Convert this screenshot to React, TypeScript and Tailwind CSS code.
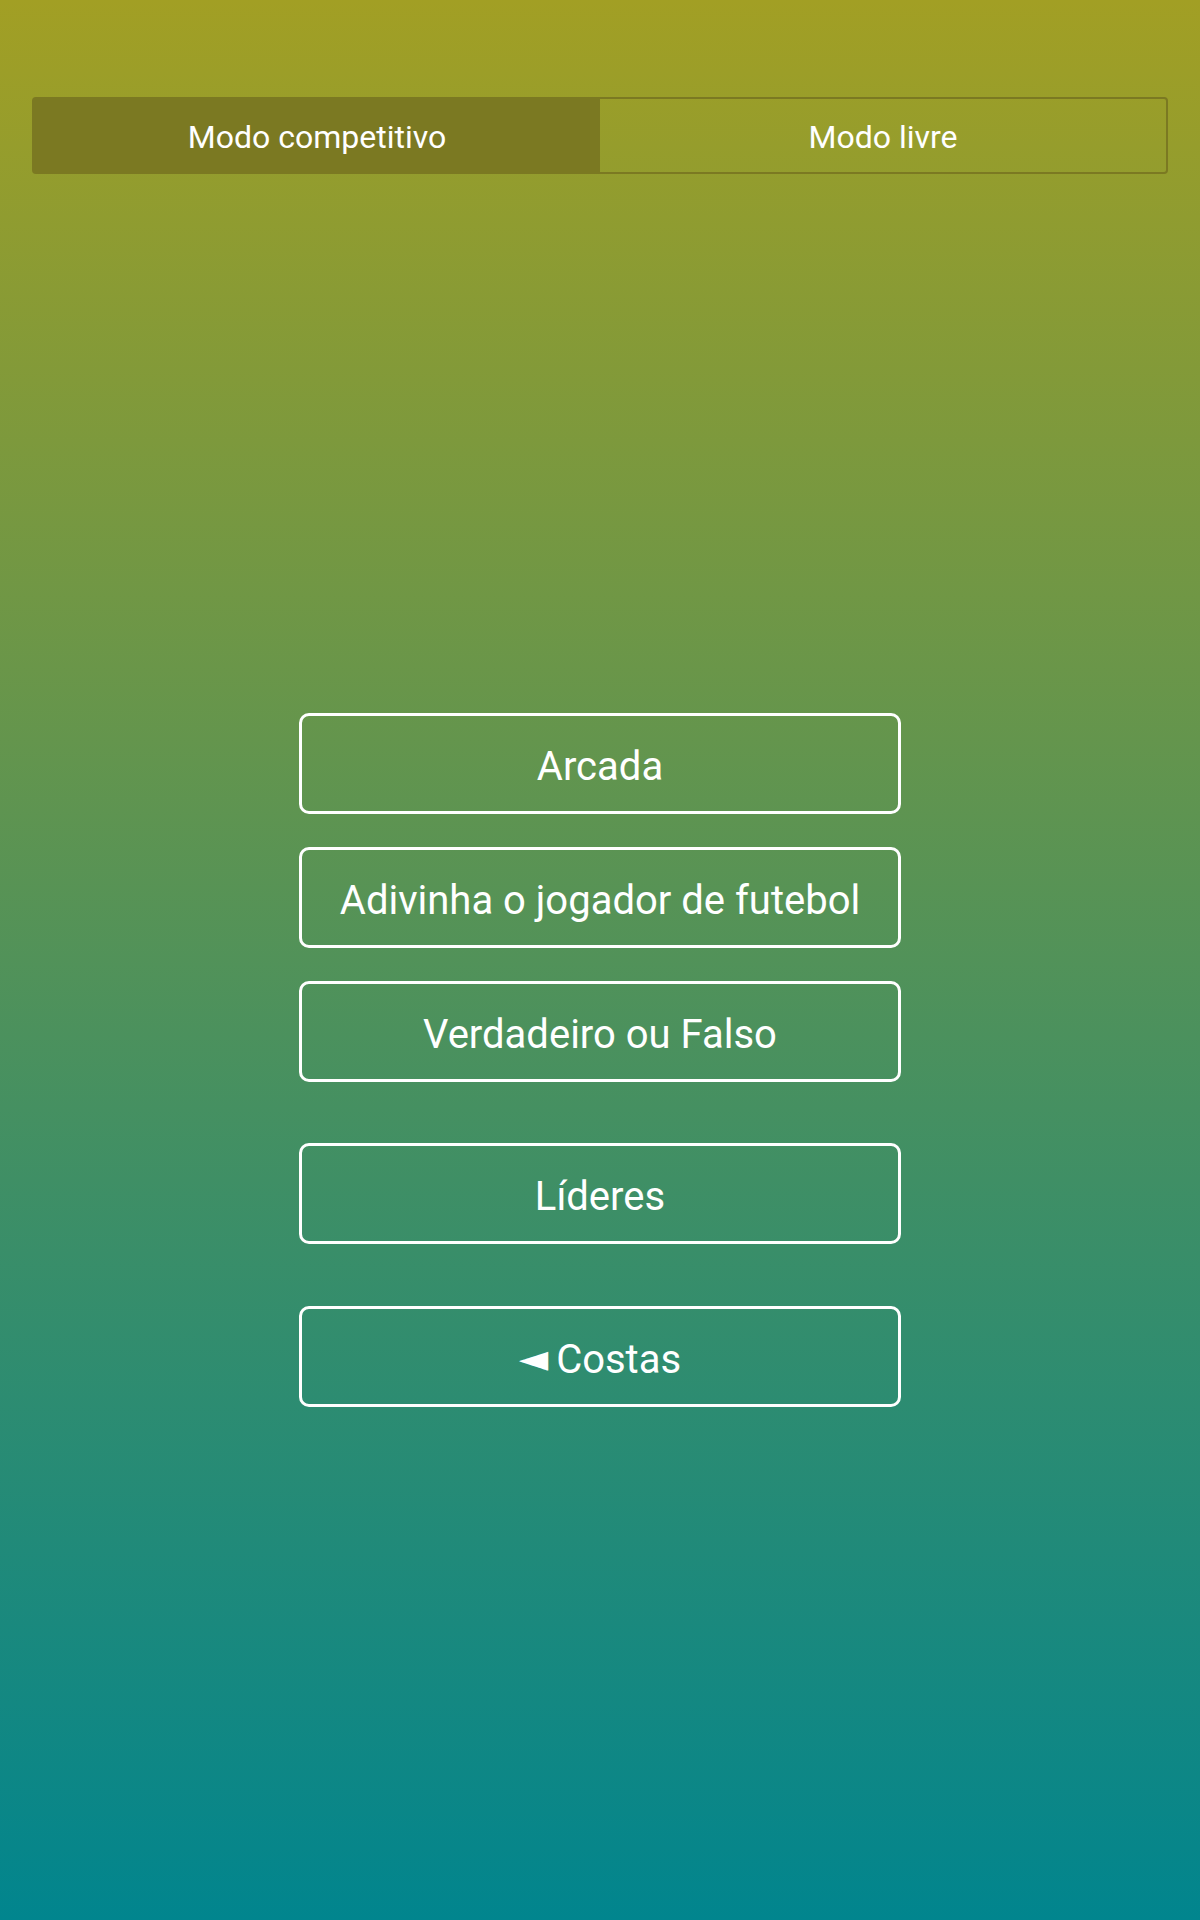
import React from "react";

export default function App() {
  const btn =
    "w-[602px] h-[101px] border-[3px] border-white rounded-[10px] flex items-center justify-center text-white text-[40px] leading-none pt-[6px]";
  return (
    <div
      className="w-[1200px] h-[1920px] flex flex-col bg-[linear-gradient(to_bottom,#a29f24,#01858e)]"
      style={{ fontFamily: "Roboto, 'Noto Sans', 'DejaVu Sans', sans-serif" }}
    >
      <div className="mx-[32px] mt-[97px] h-[77px] flex rounded-[4px] border-2 border-[#7b7922]">
        <div className="w-[566px] h-full bg-[#7b7922] flex items-center justify-center text-white text-[32px] pt-[2px]">
          Modo competitivo
        </div>
        <div className="flex-1 h-full flex items-center justify-center text-white text-[32px] pt-[2px]">
          Modo livre
        </div>
      </div>
      <div className="flex flex-col items-center mt-[539px]">
        <div className={btn}>Arcada</div>
        <div className={btn + " mt-[33px]"}>Adivinha o jogador de futebol</div>
        <div className={btn + " mt-[33px]"}>Verdadeiro ou Falso</div>
        <div className={btn + " mt-[61px]"}>Líderes</div>
        <div className={btn + " mt-[62px]"}>
          <span
            className="text-[38px] mr-[8px] mb-[4px]"
            style={{ fontFamily: "'DejaVu Sans', sans-serif" }}
          >
            ◄
          </span>
          Costas
        </div>
      </div>
    </div>
  );
}
